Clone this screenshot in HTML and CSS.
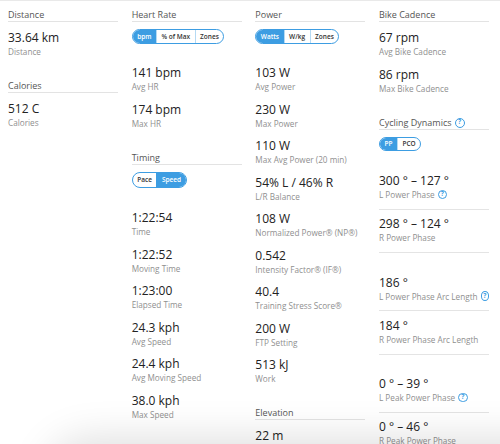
FILE: index.html
```html
<!DOCTYPE html>
<html>
<head>
<meta charset="utf-8">
<link rel="stylesheet" href="styles.css">
</head>
<body>
<div class="page">
  <div class="grid">
    <div class="col">
      <section class="sec">
        <h3 class="sec-title">Distance</h3>
        <div class="stat"><div class="val">33.64 km</div><div class="lbl">Distance</div></div>
      </section>
      <section class="sec">
        <h3 class="sec-title">Calories</h3>
        <div class="stat"><div class="val">512 C</div><div class="lbl">Calories</div></div>
      </section>
    </div>

    <div class="col">
      <section class="sec">
        <h3 class="sec-title">Heart Rate</h3>
        <div class="seg"><span class="on">bpm</span><span>% of Max</span><span>Zones</span></div>
        <div class="stat"><div class="val">141 bpm</div><div class="lbl">Avg HR</div></div>
        <div class="stat"><div class="val">174 bpm</div><div class="lbl">Max HR</div></div>
      </section>
      <section class="sec">
        <h3 class="sec-title">Timing</h3>
        <div class="seg seg-tall"><span>Pace</span><span class="on">Speed</span></div>
        <div class="stat"><div class="val">1:22:54</div><div class="lbl">Time</div></div>
        <div class="stat"><div class="val">1:22:52</div><div class="lbl">Moving Time</div></div>
        <div class="stat"><div class="val">1:23:00</div><div class="lbl">Elapsed Time</div></div>
        <div class="stat"><div class="val">24.3 kph</div><div class="lbl">Avg Speed</div></div>
        <div class="stat"><div class="val">24.4 kph</div><div class="lbl">Avg Moving Speed</div></div>
        <div class="stat"><div class="val">38.0 kph</div><div class="lbl">Max Speed</div></div>
      </section>
    </div>

    <div class="col">
      <section class="sec">
        <h3 class="sec-title">Power</h3>
        <div class="seg"><span class="on">Watts</span><span>W/kg</span><span>Zones</span></div>
        <div class="stat"><div class="val">103 W</div><div class="lbl">Avg Power</div></div>
        <div class="stat"><div class="val">230 W</div><div class="lbl">Max Power</div></div>
        <div class="stat"><div class="val">110 W</div><div class="lbl">Max Avg Power (20 min)</div></div>
        <div class="stat"><div class="val">54% L / 46% R</div><div class="lbl">L/R Balance</div></div>
        <div class="stat"><div class="val">108 W</div><div class="lbl">Normalized Power® (NP®)</div></div>
        <div class="stat"><div class="val">0.542</div><div class="lbl">Intensity Factor® (IF®)</div></div>
        <div class="stat"><div class="val">40.4</div><div class="lbl">Training Stress Score®</div></div>
        <div class="stat"><div class="val">200 W</div><div class="lbl">FTP Setting</div></div>
        <div class="stat"><div class="val">513 kJ</div><div class="lbl">Work</div></div>
      </section>
      <section class="sec">
        <h3 class="sec-title">Elevation</h3>
        <div class="stat"><div class="val">22 m</div></div>
      </section>
    </div>

    <div class="col">
      <section class="sec">
        <h3 class="sec-title">Bike Cadence</h3>
        <div class="stat"><div class="val">67 rpm</div><div class="lbl">Avg Bike Cadence</div></div>
        <div class="stat"><div class="val">86 rpm</div><div class="lbl">Max Bike Cadence</div></div>
      </section>
      <section class="sec">
        <h3 class="sec-title">Cycling Dynamics <span class="q">?</span></h3>
        <div class="seg seg-small"><span class="on">PP</span><span>PCO</span></div>
        <div class="grp">
          <div class="cd"><div class="val">300 ° – 127 °</div><div class="lbl">L Power Phase <span class="q">?</span></div></div>
          <div class="cd"><div class="val">298 ° – 124 °</div><div class="lbl">R Power Phase</div></div>
        </div>
        <div class="grp">
          <div class="cd"><div class="val">186 °</div><div class="lbl">L Power Phase Arc Length <span class="q">?</span></div></div>
          <div class="cd"><div class="val">184 °</div><div class="lbl">R Power Phase Arc Length</div></div>
        </div>
        <div class="grp">
          <div class="cd"><div class="val">0 ° – 39 °</div><div class="lbl">L Peak Power Phase <span class="q">?</span></div></div>
          <div class="cd"><div class="val">0 ° – 46 °</div><div class="lbl">R Peak Power Phase</div></div>
        </div>
      </section>
    </div>
  </div>
  <div class="shade"></div>
</div>
</body>
</html>
```

FILE: styles.css
```css
html, body {
  margin: 0;
  padding: 0;
  background: #fff;
  overflow: hidden;
}
body {
  font-family: "Open Sans", "DejaVu Sans", sans-serif;
  color: #222;
}
.page {
  border-top: 1px solid #e9e9e9;
  padding: 8px 10px 0 8px;
  height: 500px;
}
.grid {
  display: grid;
  grid-template-columns: repeat(4, 110px);
  column-gap: 13.67px;
  align-items: start;
}
.sec {
  padding-bottom: 14.5px;
}
.sec-title {
  margin: 0 0 7px;
  font-size: 9px;
  font-weight: 400;
  line-height: 12px;
  color: #555;
  border-bottom: 1px solid #e3e3e3;
  display: flex;
  align-items: center;
}
.stat {
  padding-bottom: 8.5px;
}
.val {
  font-size: 12px;
  line-height: 17px;
  color: #222;
  white-space: nowrap;
}
.lbl {
  font-size: 8.2px;
  line-height: 11px;
  color: #8f8f8f;
  white-space: nowrap;
  display: flex;
  align-items: center;
}
.seg {
  display: flex;
  width: max-content;
  height: 15px;
  box-sizing: border-box;
  border: 1px solid #3d9de2;
  border-radius: 8px;
  overflow: hidden;
  font-size: 6.5px;
  font-weight: 600;
  margin: 0.5px 0 20.3px;
}
.seg-tall {
  height: 16px;
  margin-bottom: 21.5px;
}
.seg-small {
  height: 14.5px;
  margin-top: 1.5px;
  margin-bottom: 21px;
}
.seg span {
  padding: 0 4.5px;
  display: flex;
  align-items: center;
  color: #333;
  border-left: 1px solid #b5daf3;
}
.seg span:first-child {
  border-left: 0;
}
.seg .on {
  background: #3d9de2;
  color: #fff;
  border-left-color: #3d9de2;
}
.q {
  display: inline-flex;
  align-items: center;
  justify-content: center;
  width: 7.5px;
  height: 7.5px;
  border: 1.2px solid #3d9de2;
  border-radius: 50%;
  color: #3d9de2;
  font-size: 6.5px;
  font-weight: 700;
  line-height: 1;
  margin-left: 3px;
}
.sec-title .q {
  width: 8px;
  height: 8px;
}
.grp {
  padding-bottom: 15px;
}
.cd {
  padding-bottom: 8.8px;
  border-bottom: 1px solid #e4e4e4;
  margin-bottom: 5.5px;
}
.shade {
  position: fixed;
  left: 60px;
  right: -60px;
  top: 452px;
  height: 60px;
  border-radius: 40px;
  box-shadow: 0 0 40px 14px rgba(0, 0, 0, 0.13);
}
```
